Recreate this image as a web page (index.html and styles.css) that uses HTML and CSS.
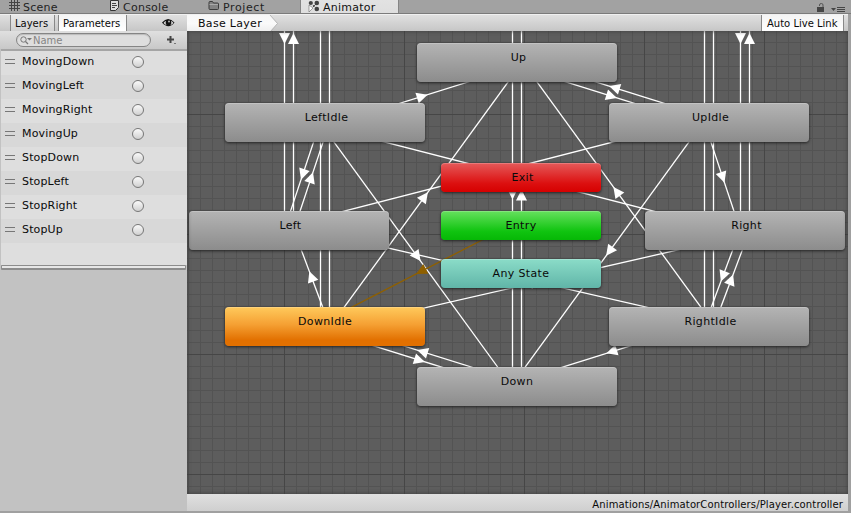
FILE: index.html
```html
<!DOCTYPE html>
<html lang="en">
<head>
<meta charset="utf-8">
<title>Animator</title>
<link rel="stylesheet" href="styles.css">
</head>
<body>
<div class="window">
  <header class="tabs">
    <div class="tab tab-scene">
      <svg class="icon" width="12" height="12" viewBox="0 0 12 12"><path d="M2.500 0v11M5.500 0v11M8.500 0v11M0 2.500h11M0 5.500h11M0 8.500h11" stroke="#444" fill="none"/></svg>
      <span>Scene</span>
    </div>
    <div class="tab tab-console">
      <svg class="icon" width="9" height="12" viewBox="0 0 9 12"><path d="M.5 .5h8v7l-3 3h-5z" fill="#ddd" stroke="#333"/><path d="M2 3.500h4M2 5.500h5M2 7.500h3" stroke="#444"/></svg>
      <span>Console</span>
    </div>
    <div class="tab tab-project">
      <svg class="icon" width="12" height="12" viewBox="0 0 12 12"><path d="M1 2.500q0-1 1-1h2.500l1 1.500h4q1 0 1 1v4.500q0 1-1 1h-7.500q-1 0-1-1z" fill="#838383" stroke="#3c3c3c"/><path d="M1.500 4.500h8.500" stroke="#aaa"/></svg>
      <span>Project</span>
    </div>
    <div class="tab tab-animator">
      <svg class="icon" width="12" height="12" viewBox="0 0 12 12"><path d="M1 5l4 3-4 4z" fill="#fff" stroke="#666" stroke-width=".6"/><path d="M5 7l4-4" stroke="#666"/><g fill="#444"><circle cx="2.800" cy="3" r="2.100"/><circle cx="8.800" cy="3" r="2.300"/><circle cx="8.800" cy="9" r="2.300"/><circle cx="5.800" cy="6" r="1"/></g></svg>
      <span>Animator</span>
    </div>
    <div class="window-tools">
      <svg width="8" height="11" viewBox="0 0 8 11"><path d="M2.500 3V2q0-1.500 1.800-1.500T6 2v4" fill="none" stroke="#555"/><path d="M0 4h7v5H0z" fill="#454545"/></svg>
      <svg width="14" height="8" viewBox="0 0 14 8"><path d="M0 2h5L2.500 5z" fill="#454545"/><path d="M6 1.500h8M6 3.500h8M6 5.500h8" stroke="#454545"/></svg>
    </div>
  </header>

  <div class="body">
    <aside class="panel">
      <div class="toolbar">
        <span class="mode mode-layers">Layers</span>
        <span class="mode mode-params">Parameters</span>
        <svg class="eye" width="13" height="10" viewBox="0 0 13 10"><path d="M0 4.500Q6-2.500 12.500 4.500 6.500 12 0 4.500z" fill="#111"/><path d="M1.500 5Q3 3 4 3 3 6 5 7 3 7 1.500 5zM11.500 5Q10 3 9 3q1 3-1 4 2 0 3.500-2z" fill="#ddd"/><circle cx="7" cy="3.600" r="1" fill="#bbb"/></svg>
      </div>
      <div class="search-row">
        <div class="search">
          <svg width="12" height="9" viewBox="0 0 12 9"><circle cx="3.500" cy="3.500" r="2.700" fill="none" stroke="#777"/><path d="M5.500 5.500L8 8" stroke="#777" stroke-width="1.300"/><path d="M7 2h5L9.500 4.500z" fill="#777"/></svg>
          <span>Name</span>
        </div>
        <svg class="add" width="9" height="9" viewBox="0 0 9 9"><path d="M3.500 0v7M0 3.500h7" stroke="#444" stroke-width="2"/><path d="M7 7.500h2" stroke="#777"/></svg>
      </div>
      <div class="list">
        <div class="row"><i class="grip"></i><span>MovingDown</span><i class="trigger"></i></div>
        <div class="row"><i class="grip"></i><span>MovingLeft</span><i class="trigger"></i></div>
        <div class="row"><i class="grip"></i><span>MovingRight</span><i class="trigger"></i></div>
        <div class="row"><i class="grip"></i><span>MovingUp</span><i class="trigger"></i></div>
        <div class="row"><i class="grip"></i><span>StopDown</span><i class="trigger"></i></div>
        <div class="row"><i class="grip"></i><span>StopLeft</span><i class="trigger"></i></div>
        <div class="row"><i class="grip"></i><span>StopRight</span><i class="trigger"></i></div>
        <div class="row"><i class="grip"></i><span>StopUp</span><i class="trigger"></i></div>
      </div>
      <div class="splitter"></div>
    </aside>

    <main class="graph">
      <div class="breadcrumbs">
        <div class="crumb">
          <svg class="crumb-shape" width="92" height="17" viewBox="0 0 92 17"><defs><linearGradient id="cg" x2="0" y2="1"><stop offset="0" stop-color="#f7f7f7"/><stop offset=".5" stop-color="#fafafa"/><stop offset="1" stop-color="#eee"/></linearGradient></defs><path d="M0 0h83l7.500 8.500L83 17H0z" fill="url(#cg)"/><path d="M83 0l7.500 8.500L83 17" fill="none" stroke="#aaa" stroke-width=".8"/></svg>
          <span>Base Layer</span>
        </div>
        <div class="live">Auto Live Link</div>
      </div>
      <div class="canvas">
        <svg class="edges" width="661" height="463" viewBox="187 31 661 463">
          <defs>
            <path id="head" d="M-5.500-5.500L5.500 0-5.500 5.500z"/>
          </defs>
          <g class="edge">
            <path d="M284.500 31V230M293.500 31V230M320.500 31V326M329.500 31V326M512.500 31V386M521.500 31V386M704.500 31V326M713.500 31V326M740.500 31V230M749.500 31V230"/>
            <use href="#head" transform="translate(284.500 38.500) rotate(90)"/>
            <use href="#head" transform="translate(293.500 38.500) rotate(-90)"/>
            <use href="#head" transform="translate(740.500 38.500) rotate(90)"/>
            <use href="#head" transform="translate(749.500 38.500) rotate(-90)"/>
            <use href="#head" transform="translate(512.500 194) rotate(90)"/>
            <use href="#head" transform="translate(521.500 195) rotate(-90)"/>

            <g transform="translate(421 92) rotate(-17.350)"><path d="M-100 4.500H100"/><use href="#head" y="4.500"/></g>
            <g transform="translate(613 92) rotate(17.350)"><path d="M-100 4.500H100"/><use href="#head" y="4.500"/></g>
            <g transform="translate(613 92) rotate(197.350)"><path d="M-100 4.500H100"/><use href="#head" y="4.500"/></g>
            <g transform="translate(421 356) rotate(17.350)"><path d="M-100 4.500H100"/><use href="#head" y="4.500"/></g>
            <g transform="translate(421 356) rotate(197.350)"><path d="M-100 4.500H100"/><use href="#head" y="4.500"/></g>
            <g transform="translate(613 356) rotate(162.650)"><path d="M-100 4.500H100"/><use href="#head" y="4.500"/></g>

            <g transform="translate(307 176) rotate(108.430)"><path d="M-57 4.500H57"/><use href="#head" y="4.500"/></g>
            <g transform="translate(307 176) rotate(-71.570)"><path d="M-57 4.500H57"/><use href="#head" y="4.500"/></g>
            <g transform="translate(727 176) rotate(71.570)"><path d="M-57 4.500H57"/><use href="#head" y="4.500"/></g>
            <g transform="translate(307 278) rotate(-110.560)"><path d="M-51 4.500H51"/><use href="#head" y="4.500"/></g>
            <g transform="translate(727 278) rotate(110.560)"><path d="M-51 4.500H51"/><use href="#head" y="4.500"/></g>
            <g transform="translate(727 278) rotate(-69.440)"><path d="M-51 4.500H51"/><use href="#head" y="4.500"/></g>

            <g transform="translate(421 194) rotate(-53.970)"><path d="M-163 4.500H163"/><use href="#head" y="4.500"/></g>
            <g transform="translate(613 194) rotate(-126.030)"><path d="M-163 4.500H163"/><use href="#head" y="4.500"/></g>
            <g transform="translate(613 254) rotate(126.030)"><path d="M-163 4.500H163"/><use href="#head" y="4.500"/></g>
            <g transform="translate(421 254) rotate(53.970)"><path d="M-163 4.500H163"/><use href="#head" y="4.500"/></g>

            <g transform="translate(535 176) rotate(14.420)"><path d="M-216 4.500H216"/><use href="#head" y="4.500"/></g>
            <g transform="translate(499 176) rotate(165.580)"><path d="M-216 4.500H216"/><use href="#head" y="4.500"/></g>
            <g transform="translate(499 278) rotate(192.880)"><path d="M-215 4.500H215"/><use href="#head" y="4.500"/></g>
            <g transform="translate(535 278) rotate(-12.880)"><path d="M-215 4.500H215"/><use href="#head" y="4.500"/></g>
          </g>
          <g class="edge default" transform="translate(423 275.500) rotate(152.740)"><path d="M-110 4.500H110"/><use href="#head" y="4.500"/></g>
        </svg>
        <div class="node n-up">Up</div>
        <div class="node n-leftidle">LeftIdle</div>
        <div class="node n-upidle">UpIdle</div>
        <div class="node n-left">Left</div>
        <div class="node n-right">Right</div>
        <div class="node n-downidle">DownIdle</div>
        <div class="node n-rightidle">RightIdle</div>
        <div class="node n-down">Down</div>
        <div class="node small n-exit">Exit</div>
        <div class="node small n-entry">Entry</div>
        <div class="node small n-any">Any State</div>
      </div>
      <footer class="path">Animations/AnimatorControllers/Player.controller</footer>
    </main>
  </div>
</div>
</body>
</html>
```
FILE: styles.css
```css
* { box-sizing: border-box; }
body {
  margin: 0;
  font: 11px/14px "DejaVu Sans", sans-serif;
  color: #0a0a0a;
  background: #a0a0a0;
}
svg { display: block; flex: none; }
.window {
  width: 851px;
  height: 513px;
  display: flex;
  flex-direction: column;
  overflow: hidden;
}

.tabs {
  height: 14px;
  flex: none;
  display: flex;
  background: #a2a2a2;
  border-bottom: 1px solid #7b7b7b;
  color: #222;
  line-height: 15px;
  letter-spacing: .25px;
}
.tab { display: flex; gap: 2px; height: 13px; }
.tab-scene { width: 110px; padding-left: 9px; }
.tab-console { width: 98px; gap: 4px; }
.tab-project { width: 92px; gap: 3px; letter-spacing: .6px; }
.tab-animator {
  width: 99px;
  padding-left: 7px;
  background: linear-gradient(#e2e2e2, #dedede);
  border-left: 1px solid #858585;
  border-right: 1px solid #858585;
  color: #111;
  gap: 3px;
}
.window-tools {
  margin-left: auto;
  padding: 3px 6px 0 0;
  display: flex;
  gap: 6px;
}
.window-tools svg + svg { margin-top: 3px; }

.body { flex: 1; display: flex; min-height: 0; padding: 0 3px 2px 0; }
.panel {
  width: 187px;
  flex: none;
  display: flex;
  flex-direction: column;
  background: #c2c2c2;
}
.toolbar, .breadcrumbs {
  height: 17px;
  flex: none;
  display: flex;
  border-top: 1px solid #f0f0f0;
  background: linear-gradient(#e0e0e0, #c6c6c6);
  font-size: 10px;
  line-height: 18px;
}
.toolbar { padding-left: 10px; }
.mode {
  border-left: 1px solid #888;
  border-right: 1px solid #888;
  padding-left: 4px;
}
.mode-layers { width: 45px; background: linear-gradient(#e9e9e9, #d2d2d2); }
.mode-params {
  width: 69px;
  margin-left: 3px;
  background: linear-gradient(#f4f4f4, #fff);
}
.eye { margin: 3px 0 0 35px; }
.search-row {
  height: 18px;
  flex: none;
  display: flex;
  background: linear-gradient(#e0e0e0, #c8c8c8);
  padding: 2px 0 0 16px;
}
.search {
  width: 135px;
  height: 14px;
  border: 1px solid #858585;
  border-radius: 7px;
  background: #dedede;
  color: #858585;
  font-size: 10px;
  line-height: 13px;
  display: flex;
  padding-left: 3px;
  box-shadow: inset 0 1px 1px #bbb;
}
.search svg { margin-top: 2px; }
.search span { margin-left: 1px; }
.add { margin: 3px 0 0 16px; }
.list {
  height: 216px;
  flex: none;
  margin-left: 1px;
  border-top: 2px solid #a5a5a5;
  background: #dedede;
}
.row {
  height: 24px;
  display: flex;
  align-items: center;
  background: #dedede;
}
.row:nth-child(even) { background: #d8d8d8; }
.row span { width: 110px; margin-left: 7px; margin-top: -3px; letter-spacing: .15px; }
.grip {
  width: 10px;
  height: 5px;
  margin: -3px 0 0 4px;
  border-top: 1px solid #777;
  border-bottom: 1px solid #777;
}
.trigger {
  width: 12px;
  height: 12px;
  margin-top: -2px;
  border: 1px solid #777;
  border-radius: 50%;
  background: linear-gradient(#fafafa, #d0d0d0);
}
.splitter {
  height: 5px;
  flex: none;
  margin: 0 1px;
  border: 1px solid #8c8c8c;
  border-bottom-width: 2px;
  border-radius: 1px;
  background: #e6e6e6;
}

.graph { flex: 1; display: flex; flex-direction: column; min-width: 0; }
.crumb { position: relative; width: 92px; }
.crumb-shape { position: absolute; left: 0; top: 0; }
.crumb span {
  position: relative;
  padding-left: 11px;
  font-size: 11px;
  line-height: 17px;
  letter-spacing: .3px;
  white-space: nowrap;
}
.live {
  width: 83px;
  margin: 0 4px 0 auto;
  padding-left: 5px;
  background: linear-gradient(#f4f4f4, #fff);
  border-left: 1px solid #888;
  border-right: 1px solid #888;
  white-space: nowrap;
}
.canvas {
  position: relative;
  height: 463px;
  flex: none;
  overflow: hidden;
  background-color: #5d5d5d;
  background-image:
    linear-gradient(90deg, #464646 1px, transparent 1px),
    linear-gradient(#464646 1px, transparent 1px),
    linear-gradient(90deg, #535353 1px, transparent 1px),
    linear-gradient(#535353 1px, transparent 1px);
  background-size: 120px 120px, 120px 120px, 12px 12px, 12px 12px;
  background-position: 97px 0, 0 83px, 1px 0, 0 11px;
}
.canvas::after {
  content: "";
  position: absolute;
  inset: 0;
  box-shadow: inset 0 0 4px #3c3c3c;
  pointer-events: none;
}
.edges { position: absolute; left: 0; top: 0; }
.edge { stroke: #fff; stroke-width: 1.300; fill: #fff; }
.edge use { stroke: none; }
.edge.default { stroke: #8f6000; fill: #8f6000; }
.node {
  position: absolute;
  width: 200px;
  height: 39px;
  padding-top: 8px;
  border-radius: 4px;
  background: linear-gradient(#b4b4b4, #8c8c8c);
  box-shadow: 0 1px 3px #222, inset 0 1px 0 rgba(255, 255, 255, .2);
  text-align: center;
  letter-spacing: .35px;
}
.small { width: 160px; height: 29px; left: 254px; }
.n-up { left: 230px; top: 12px; padding-left: 3px; }
.n-leftidle { left: 38px; top: 72px; padding-left: 3px; }
.n-upidle { left: 422px; top: 72px; padding-left: 3px; }
.n-left { left: 2px; top: 180px; padding-left: 3px; }
.n-right { left: 458px; top: 180px; padding-left: 3px; }
.n-downidle {
  left: 38px;
  top: 276px;
  background: linear-gradient(#ffca5c, #f5a033 45%, #e27000 85%);
}
.n-rightidle { left: 422px; top: 276px; padding-left: 3px; }
.n-down { left: 230px; top: 336px; }
.n-exit { top: 132px; padding-left: 3px; background: linear-gradient(#e55a5a, #dc1010 70%, #d60000); }
.n-entry { top: 180px; background: linear-gradient(#66e05e, #10c410 70%, #06b806); }
.n-any { top: 228px; background: linear-gradient(#8bdcc8, #60b5a8); }
.path {
  height: 17px;
  flex: none;
  padding-right: 5px;
  background: linear-gradient(#e0e0e0, #cfcfcf);
  text-align: right;
  font-size: 10px;
  line-height: 21px;
  letter-spacing: .13px;
}
```
